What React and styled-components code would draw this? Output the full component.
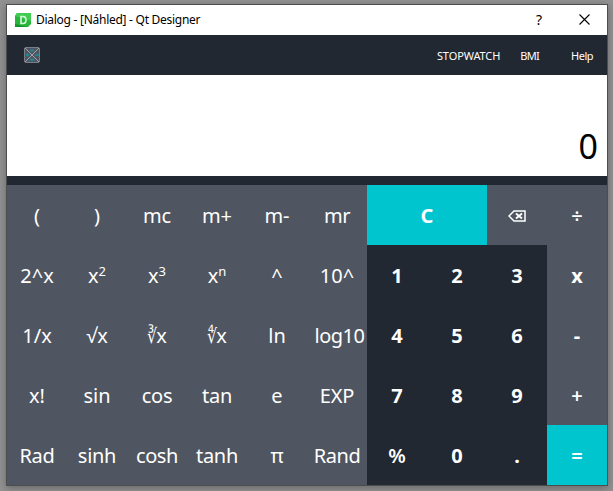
import React from "react";
import styled, { createGlobalStyle } from "styled-components";

const GlobalStyle = createGlobalStyle`
  * { box-sizing: border-box; }
  html, body { margin: 0; padding: 0; overflow: hidden; }
  button { border: 0; padding: 0; font: inherit; color: inherit; background: none; }
`;

const Desktop = styled.div`
  width: 613px;
  height: 491px;
  padding: 4px 5px 5px 6px;
  background: #929292;
  font-family: "Noto Sans", "Open Sans", sans-serif;
  overflow: hidden;
`;

const Window = styled.main`
  width: 602px;
  height: 482px;
  border: 1px solid #4d4d4d;
  background: #222831;
  box-shadow: 0 2px 8px rgba(0, 0, 0, 0.3);
`;

const TitleBar = styled.header`
  display: flex;
  align-items: center;
  height: 30px;
  padding-left: 8px;
  background: #fff;
  color: #000;
`;

const Title = styled.h1`
  flex: 1;
  margin: 0 0 0 5px;
  font-size: 12px;
  font-weight: 400;
  line-height: 30px;
  letter-spacing: -0.27px;
`;

const TitleButton = styled.button`
  display: flex;
  align-items: center;
  justify-content: center;
  width: 45px;
  height: 30px;
  padding: 0 1px 2px 0;
  font-size: 14px;
`;

const MenuBar = styled.nav`
  display: flex;
  align-items: center;
  height: 40px;
  padding: 0 14px 0 17px;
  color: #fff;
  font-size: 11px;
`;

const MenuItem = styled.button`
  margin-left: ${(p) => p.$gap};
  padding-top: 1px;
  line-height: 40px;
  letter-spacing: ${(p) => p.$spacing || "0"};
`;

const Display = styled.output`
  display: flex;
  align-items: flex-end;
  justify-content: flex-end;
  height: 101px;
  padding: 0 9px 7px 0;
  background: #fff;
  color: #000;
  font-size: 34px;
  line-height: 46px;
`;

const Keypad = styled.section`
  display: grid;
  grid-template-columns: repeat(10, 60px);
  grid-template-rows: repeat(5, 60px);
  margin-top: 9px;
`;

const tones = { slate: "#505661", dark: "#222831", cyan: "#00c5cf" };

const Key = styled.button`
  display: flex;
  align-items: center;
  justify-content: center;
  grid-column: span ${(p) => p.$span || 1};
  padding-top: 1px;
  padding-left: ${(p) => p.$shift || 0}px;
  background: ${(p) => tones[p.$tone || "slate"]};
  color: #fff;
  font-size: 20px;
  font-weight: ${(p) => p.$weight || 400};
  letter-spacing: ${(p) => p.$spacing || 0}px;
  line-height: 28px;
  white-space: pre;
`;

const Power = styled.span`
  font-size: 13px;
  line-height: 13px;
  transform: translateY(-4px);
`;

const Root = styled.span`
  width: 9px;
  font-family: "DejaVu Sans", sans-serif;
  font-size: 20px;
  transform: scaleX(0.78);
  transform-origin: left center;
`;

const AppIcon = () => (
  <svg width="16" height="14" viewBox="0 0 16 14" aria-hidden="true">
    <path d="M2 0H16V11L13 14H0V3Z" fill="#28b53c" />
    <path d="M2 0H16V8L0 3Z" fill="#41cd52" />
    <path d="M0 11L13 14H0Z" fill="#13942a" />
    <path d="M6 3.5H8C10.2 3.5 11 5 11 7S10 10.5 8 10.5H6Z" fill="none" stroke="#d8f8dc" strokeWidth="1.6" />
  </svg>
);

const CloseIcon = () => (
  <svg width="11" height="11" viewBox="0 0 11 11" aria-hidden="true">
    <path d="M.5 .5L10.5 10.5M10.5 .5L.5 10.5" stroke="#000" strokeWidth="1.1" />
  </svg>
);

const MenuIcon = () => (
  <svg width="16" height="16" viewBox="0 0 16 16" aria-hidden="true">
    <rect x=".5" y=".5" width="15" height="15" rx="1.5" fill="#505661" stroke="#77808a" />
    <path d="M6 3.5H10M6 12.5H10M8 12V14M2 8H5M3.5 6.5V9.5M11 8H15" stroke="#168e9c" strokeWidth="1.4" />
    <path d="M1 1L15 15M15 1L1 15" stroke="#a6abb1" strokeWidth=".9" />
  </svg>
);

const BackspaceIcon = () => (
  <svg width="18" height="12" viewBox="0 0 18 12" aria-hidden="true">
    <path d="M6 1H17V11H6L1 6Z" fill="none" stroke="#fff" strokeWidth="1.5" />
    <path d="M8 3.5L14 8.5M14 3.5L8 8.5" stroke="#fff" strokeWidth="1.9" />
  </svg>
);

const digit = (t) => ({ t, tone: "dark", weight: 700 });

const keys = [
  { t: "(" }, { t: ")" }, { t: "mc", ls: -0.2 }, { t: "m+" }, { t: "m-" }, { t: "mr", ls: -0.4 },
  { t: "C", tone: "cyan", span: 2, weight: 700 },
  { t: <BackspaceIcon />, name: "Backspace" }, { t: "÷", weight: 600 },

  { t: "2^x" }, { t: "x", power: "2" }, { t: "x", power: "3" }, { t: "x", power: "n" },
  { t: "^" }, { t: "10^" },
  digit("1"), digit("2"), digit("3"), { t: "x", weight: 700 },

  { t: "1/x" }, { t: "√x" }, { t: "x", root: "∛" }, { t: "x", root: "∜" },
  { t: "ln" }, { t: "log10", ls: -0.5, shift: 5 },
  digit("4"), digit("5"), digit("6"), { t: "-", weight: 700 },

  { t: "x!" }, { t: "sin" }, { t: "cos", ls: -0.2 }, { t: "tan", ls: -0.2 }, { t: "e" }, { t: "EXP", ls: -0.2 },
  digit("7"), digit("8"), digit("9"), { t: "+", weight: 600 },

  { t: "Rad", ls: -0.3 }, { t: "sinh", ls: -0.3 }, { t: "cosh", ls: -0.4 }, { t: "tanh", ls: -0.3 },
  { t: "π" }, { t: "Rand", ls: -0.4 },
  { t: "%", tone: "dark", weight: 600 }, digit("0"), digit("."),
  { t: "=", tone: "cyan", weight: 700 },
];

export default function App() {
  return (
    <Desktop>
      <GlobalStyle />
      <Window>
        <TitleBar>
          <AppIcon />
          <Title>Dialog - [Náhled] - Qt Designer</Title>
          <TitleButton>?</TitleButton>
          <TitleButton aria-label="Close"><CloseIcon /></TitleButton>
        </TitleBar>
        <MenuBar>
          <MenuIcon />
          <MenuItem $gap="auto" $spacing="-0.1px">STOPWATCH</MenuItem>
          <MenuItem $gap="20px" $spacing="-0.7px">BMI</MenuItem>
          <MenuItem $gap="32px" $spacing="-0.5px">Help</MenuItem>
        </MenuBar>
        <Display>0</Display>
        <Keypad>
          {keys.map((k, i) => (
            <Key key={i} $tone={k.tone} $span={k.span} $weight={k.weight} $spacing={k.ls} $shift={k.shift} aria-label={k.name}>
              {k.root && <Root>{k.root}</Root>}
              {k.t}
              {k.power && <Power>{k.power}</Power>}
            </Key>
          ))}
        </Keypad>
      </Window>
    </Desktop>
  );
}
